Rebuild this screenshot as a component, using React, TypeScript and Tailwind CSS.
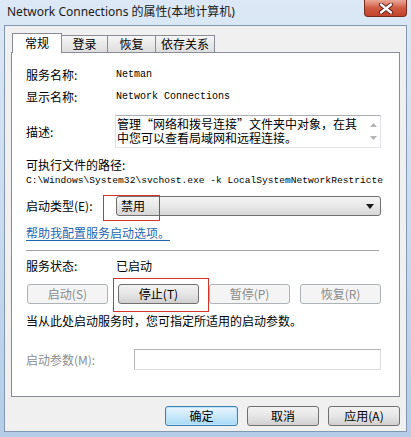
import React from 'react';

const cjk = "font-['Noto_Sans_CJK_SC','Noto_Sans',sans-serif]";
const mono = "font-['Liberation_Mono','Noto_Sans_CJK_SC',monospace]";

type BtnProps = { label: string; disabled?: boolean; primary?: boolean; width: string };

const Btn: React.FC<BtnProps> = ({ label, disabled, primary, width }) => {
  let look =
    'border-[#707070] bg-gradient-to-b from-[#f2f2f2] via-[#e6e6e6] to-[#d0d0d0] text-black';
  if (disabled) look = 'border-[#adb2b5] bg-[#f4f4f4] text-[#8a8a8a]';
  if (primary)
    look = 'border-[#3c7fb1] bg-gradient-to-b from-[#eaf6fd] via-[#c9e8f9] to-[#a7d9f5] text-black shadow-[inset_0_0_0_1px_#bfe4f8]';
  return (
    <div
      className={`${width} h-[20px] rounded-[3px] border flex items-center justify-center text-[12px] leading-[14px] ${look}`}
    >
      {label}
    </div>
  );
};

const App: React.FC = () => {
  return (
    <div
      className={`relative w-[411px] h-[437px] flex flex-col bg-gradient-to-b from-[#dce8f5] via-[#c9dcf0] to-[#b4cce8] overflow-hidden ${cjk}`}
    >
      {/* Title bar */}
      <div className="h-[25px] flex items-start shrink-0">
        <div className="pl-[7px] pt-[4px] text-[12px] leading-[16px] text-[#1b1b1b] font-['Noto_Sans','Noto_Sans_CJK_SC',sans-serif]">
          Network Connections 的属性(本地计算机)
        </div>
        <div className="ml-auto mr-[4px] w-[43px] h-[17px] rounded-b-[4px] border border-t-0 border-[#7a2b20] bg-gradient-to-b from-[#e9a898] via-[#cf5a42] to-[#c2432c] flex items-center justify-center">
          <svg width="16" height="11" viewBox="0 0 16 11">
            <path d="M3 1.5 L13 9.5 M13 1.5 L3 9.5" stroke="#5a1a12" strokeWidth="4.2" strokeLinecap="round" />
            <path d="M3 1.5 L13 9.5 M13 1.5 L3 9.5" stroke="#ffffff" strokeWidth="2.4" strokeLinecap="round" />
          </svg>
        </div>
      </div>

      {/* Client area */}
      <div className="mx-[4px] mb-[5px] flex-1 border border-[#8497b0] bg-[#f0f0f0] px-[6px] pt-[7px] flex flex-col">
        {/* Tabs */}
        <div className="flex items-end h-[19px] pl-[1px] text-[12px]">
          <div className="relative z-10 -mb-px h-[20px] w-[50px] bg-white border border-b-0 border-[#898c95] flex justify-center pt-[1px] leading-[16px]">
            常规
          </div>
          <div className="h-[17px] w-[46px] bg-gradient-to-b from-[#f5f5f5] to-[#dedede] border border-b-0 border-l-0 border-[#898c95] flex justify-center leading-[16px]">
            登录
          </div>
          <div className="h-[17px] w-[48px] bg-gradient-to-b from-[#f5f5f5] to-[#dedede] border border-b-0 border-l-0 border-[#898c95] flex justify-center leading-[16px]">
            恢复
          </div>
          <div className="h-[17px] w-[59px] bg-gradient-to-b from-[#f5f5f5] to-[#dedede] border border-b-0 border-l-0 border-[#898c95] flex justify-center leading-[16px]">
            依存关系
          </div>
        </div>

        {/* Tab panel */}
        <div className="h-[345px] border border-[#898c95] bg-white pl-[14px] pr-[18px] pt-[14px] flex flex-col text-[12px] text-black">
          <div className="flex h-[16px] items-center leading-[16px]">
            <span className="w-[90px]">服务名称:</span>
            <span className={`${mono} text-[10px]`}>Netman</span>
          </div>
          <div className="mt-[6px] flex h-[16px] items-center leading-[16px]">
            <span className="w-[90px]">显示名称:</span>
            <span className={`${mono} text-[10px]`}>Network Connections</span>
          </div>

          {/* Description box */}
          <div className="mt-[10px] flex h-[33px] items-center">
            <span className="w-[89px]">描述:</span>
            <div className="flex-1 h-[33px] flex bg-white border border-[#e2e3ea] border-t-[#abadb3]">
              <div className="flex-1 pl-[1px] pt-[1px] text-[12px] leading-[14px] overflow-hidden whitespace-nowrap">
                <div>管理“网络和拨号连接”文件夹中对象，在其</div>
                <div>中您可以查看局域网和远程连接。</div>
              </div>
              <div className="w-[13px] flex flex-col items-center justify-between py-[7px]">
                <svg width="7" height="4" viewBox="0 0 7 4">
                  <path d="M0 4 L3.5 0 L7 4 Z" fill="#b4b4b4" />
                </svg>
                <svg width="7" height="4" viewBox="0 0 7 4">
                  <path d="M0 0 L3.5 4 L7 0 Z" fill="#b4b4b4" />
                </svg>
              </div>
            </div>
          </div>

          <div className="mt-[9px] h-[16px] leading-[16px]">可执行文件的路径:</div>
          <div className={`mt-[1px] h-[14px] w-[357px] leading-[14px] whitespace-nowrap overflow-hidden text-[9.6px] ${mono}`}>
            C:\Windows\System32\svchost.exe -k LocalSystemNetworkRestricted
          </div>

          {/* Startup type */}
          <div className="mt-[8px] flex h-[20px] items-center">
            <span className="w-[90px] leading-[16px]">启动类型(E):</span>
            <div className="flex-1 h-[20px] rounded-[3px] border border-[#707070] bg-gradient-to-b from-[#f4f4f4] via-[#e8e8e8] to-[#d6d6d6] flex items-center pl-[4px] pr-[6px]">
              <span className="text-[12px] leading-[14px]">禁用</span>
              <svg className="ml-auto" width="8" height="5" viewBox="0 0 8 5">
                <path d="M0 0 L8 0 L4 5 Z" fill="#1a1a1a" />
              </svg>
            </div>
          </div>

          <div className="mt-[9px] h-[16px] leading-[16px] text-[#1f66b0] underline underline-offset-2">
            帮助我配置服务启动选项。
          </div>

          <div className="mt-[9px] h-px w-[353px] bg-[#a5a5a5]" />

          <div className="mt-[7px] flex h-[16px] items-center leading-[16px]">
            <span className="w-[90px]">服务状态:</span>
            <span>已启动</span>
          </div>

          {/* Service control buttons */}
          <div className="mt-[10px] flex justify-between pl-[1px]">
            <Btn label="启动(S)" disabled width="w-[81px]" />
            <Btn label="停止(T)" width="w-[81px]" />
            <Btn label="暂停(P)" disabled width="w-[81px]" />
            <Btn label="恢复(R)" disabled width="w-[81px]" />
          </div>

          <div className="mt-[9px] h-[16px] leading-[16px]">当从此处启动服务时，您可指定所适用的启动参数。</div>

          {/* Start parameters */}
          <div className="mt-[20px] flex h-[21px] items-center">
            <span className="w-[108px] leading-[16px] text-[#8d8d8d]">启动参数(M):</span>
            <div className="flex-1 h-[21px] bg-white border border-[#dcdcdc] border-t-[#b5b5b5] border-l-[#b5b5b5]" />
          </div>
        </div>

        {/* Dialog buttons */}
        <div className="mt-[9px] flex justify-end gap-[9px]">
          <Btn label="确定" primary width="w-[73px]" />
          <Btn label="取消" width="w-[72px]" />
          <Btn label="应用(A)" width="w-[72px]" />
        </div>
      </div>

      {/* Red annotation boxes */}
      <div className="absolute left-[103px] top-[195px] w-[57px] h-[26px] border border-[#d8332a]" />
      <div className="absolute left-[113px] top-[278px] w-[96px] h-[34px] border border-[#d8332a]" />
    </div>
  );
};

export default App;
